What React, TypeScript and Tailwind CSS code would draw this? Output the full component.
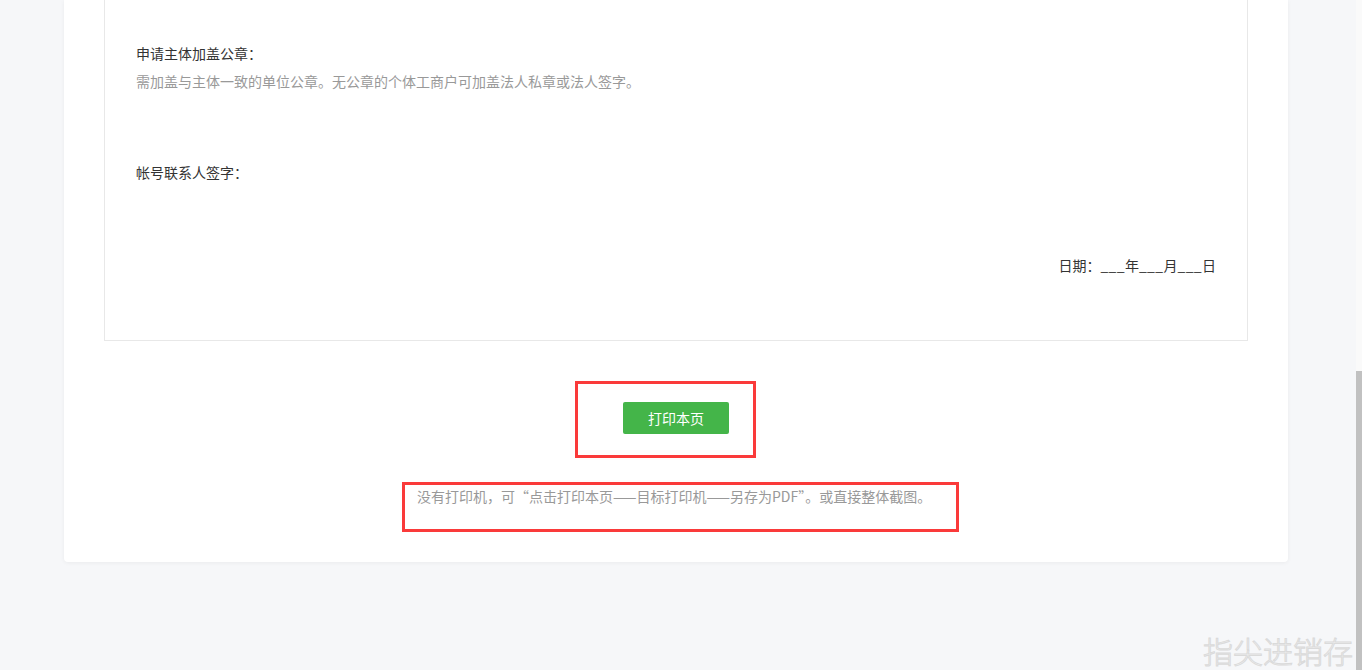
export default function App() {
  return (
    <div className="relative w-full h-[670px] overflow-hidden bg-[#f6f7f9] font-['Noto_Sans_CJK_SC','Noto_Sans',sans-serif] text-[14px] leading-[20px]">
      <div className="pl-[64px] pr-[74px]">
        <div className="bg-white rounded-b-[4px] shadow-[0_1px_4px_rgba(0,0,0,0.05)] px-[40px] pb-[30px]">
          {/* Form tail */}
          <div className="border border-t-0 border-[#e8e8e8] px-[31px] pt-[43px] pb-[65px]">
            <p className="text-[#333]">申请主体加盖公章：</p>
            <p className="mt-[8px] text-[#999]">
              需加盖与主体一致的单位公章。无公章的个体工商户可加盖法人私章或法人签字。
            </p>
            <p className="mt-[71px] text-[#333]">帐号联系人签字：</p>
            <div className="mt-[73px] text-right text-[#333]">
              日期：<span className="tracking-[0.35px]">___</span>年<span className="tracking-[0.35px]">___</span>月<span className="tracking-[0.35px]">___</span>日
            </div>
          </div>

          {/* Print actions */}
          <div className="flex flex-col items-center">
            <div className="mt-[40px] mr-[21px] w-[181px] h-[77px] border-[3px] border-[#fa3a3a] pt-[18px] pl-[45px]">
              <button className="w-[106px] h-[32px] rounded-[2px] bg-[#44b549] text-white text-[14px]">
                打印本页
              </button>
            </div>
            <div className="mt-[24px] ml-[9px] w-[557px] h-[50px] border-[3px] border-[#fa3a3a] pl-[12px] pt-[1px] text-[#999]">
              没有打印机，可“点击打印本页——目标打印机——另存为PDF”。或直接整体截图。
            </div>
          </div>
        </div>
      </div>

      {/* Watermark */}
      <div className="absolute left-[1203px] top-[630px] text-[30px] leading-[40px] font-light text-[#f3f3f3] [-webkit-text-stroke:1px_#dadada] whitespace-nowrap select-none">
        指尖进销存
      </div>

      {/* Scrollbar */}
      <div className="absolute right-0 top-0 w-[6px] h-full bg-[#fafafa]">
        <div className="mt-[371px] h-[299px] bg-[#c1c1c1]" />
      </div>
    </div>
  );
}
